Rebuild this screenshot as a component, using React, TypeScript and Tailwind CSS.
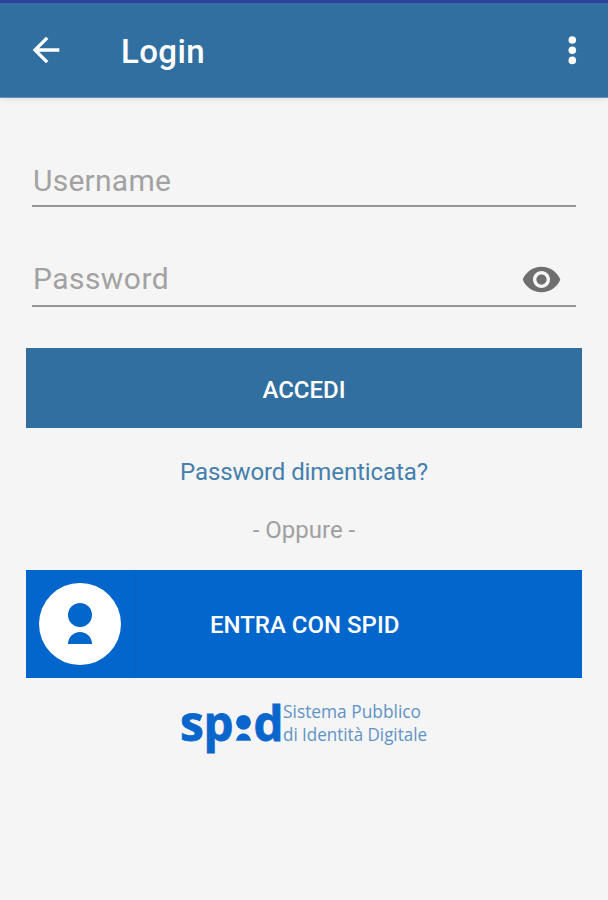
import React from "react"

interface FieldProps {
  label: string
  type: string
  className?: string
  inputClassName?: string
  children?: React.ReactNode
}

// Text field with a bottom line, optional icon on the right
function Field({ label, type, className, inputClassName, children }: FieldProps) {
  return (
    <div className={`mx-8 flex h-[45px] items-center border-b-2 border-[#969696] pl-px ${className}`}>
      <input
        type={type}
        placeholder={label}
        className={`min-w-0 flex-1 bg-transparent p-0 text-[30px] leading-[36px] outline-none placeholder:text-[#a2a2a2] ${inputClassName}`}
      />
      {children}
    </div>
  )
}

function SpidLogo() {
  return (
    <svg width="256" height="84" viewBox="-2 -14 256 84" className="block">
      <g fill="#0a66cc" fontFamily="'Open Sans', 'Noto Sans', sans-serif" fontWeight="700" fontSize="48">
        <g stroke="#0a66cc" strokeWidth="0.8">
          <text x="-1" y="43.5" textLength="24" lengthAdjust="spacingAndGlyphs">s</text>
          <text x="22.5" y="43.5" textLength="30" lengthAdjust="spacingAndGlyphs">p</text>
          <text x="72.5" y="43.5" textLength="30" lengthAdjust="spacingAndGlyphs">d</text>
        </g>
        <circle cx="62.5" cy="25.3" r="7.4" />
        <path d="M55 43.8C56 39 59 36.6 62.5 36.6S69 39 70 43.8z" />
      </g>
      <g fill="#5f93c6" fontFamily="'Open Sans', 'Noto Sans', sans-serif" fontSize="18">
        <text x="102" y="21" textLength="138" lengthAdjust="spacingAndGlyphs">Sistema Pubblico</text>
        <text x="102" y="44" textLength="144" lengthAdjust="spacingAndGlyphs">di Identità Digitale</text>
      </g>
    </svg>
  )
}

export default function App() {
  return (
    <div className="h-[900px] w-[608px] overflow-hidden bg-[#f5f5f5] font-['Roboto',sans-serif]">
      {/* Toolbar */}
      <header className="flex h-[98px] items-center border-t-[3px] border-t-[#2c409c] border-b border-b-[#6a94b5] bg-[#316fa0] pl-[26px] pr-[16px] text-white shadow-[0_1px_6px_rgba(0,0,0,0.1)]">
        <button aria-label="Indietro">
          <svg width="40" height="40" viewBox="0 0 24 24" fill="currentColor" className="block">
            <path d="M20 11H7.83l5.59-5.59L12 4l-8 8 8 8 1.41-1.41L7.83 13H20v-2z" />
          </svg>
        </button>
        <h1 className="ml-[55px] flex-1 pt-[4px] text-[33px] font-medium leading-[40px] tracking-[0.4px]">Login</h1>
        <button aria-label="Menu">
          <svg width="40" height="40" viewBox="0 0 40 40" fill="currentColor" className="block">
            <circle cx="20.3" cy="10" r="3.8" />
            <circle cx="20.3" cy="20.2" r="3.8" />
            <circle cx="20.3" cy="30.4" r="3.8" />
          </svg>
        </button>
      </header>

      {/* Login form */}
      <form className="pt-[64px]">
        <Field label="Username" type="text" className="pb-[5px]" inputClassName="tracking-[0.25px]" />
        <Field label="Password" type="password" className="mt-[55px] pb-[9px]" inputClassName="tracking-[0.45px]">
          <svg width="41" height="41" viewBox="0 0 24 24" fill="#6f6f6f" className="mr-[14px] shrink-0">
            <path d="M12 4.5C7 4.5 2.73 7.61 1 12c1.73 4.39 6 7.5 11 7.5s9.27-3.11 11-7.5c-1.73-4.39-6-7.5-11-7.5zM12 17c-2.76 0-5-2.24-5-5s2.24-5 5-5 5 2.24 5 5-2.24 5-5 5zm0-8c-1.66 0-3 1.34-3 3s1.34 3 3 3 3-1.34 3-3-1.34-3-3-3z" />
          </svg>
        </Field>
        <button
          type="button"
          className="mx-[26px] mt-[41px] flex h-[80px] w-[556px] items-center justify-center bg-[#316fa0] pt-[3px] text-[24px] font-medium text-white"
        >
          ACCEDI
        </button>
      </form>

      <div className="flex flex-col items-center">
        <a href="#" className="mt-[29px] text-[24px] leading-[30px] tracking-[-0.1px] text-[#4580ad]">
          Password dimenticata?
        </a>
        <p className="mt-[28px] text-[24px] leading-[30px] text-[#a0a0a0]">- Oppure -</p>
      </div>

      {/* SPID access */}
      <button className="mx-[26px] mt-[25px] flex h-[108px] w-[556px] items-center bg-[#0266cc] text-white">
        <span className="flex h-full w-[109px] items-center border-r border-[#045fbd] pl-[13px]">
          <svg width="82" height="82" viewBox="0 0 82 82">
            <circle cx="41" cy="41" r="41" fill="#fff" />
            <g fill="#0266cc">
              <circle cx="41" cy="32" r="12" />
              <path d="M29 61a12 12 0 0 1 24 0z" />
            </g>
          </svg>
        </span>
        <span className="ml-[75px] pt-[2px] text-[24px] font-medium">ENTRA CON SPID</span>
      </button>

      <div className="ml-[179px] mt-[5px]">
        <SpidLogo />
      </div>
    </div>
  )
}
